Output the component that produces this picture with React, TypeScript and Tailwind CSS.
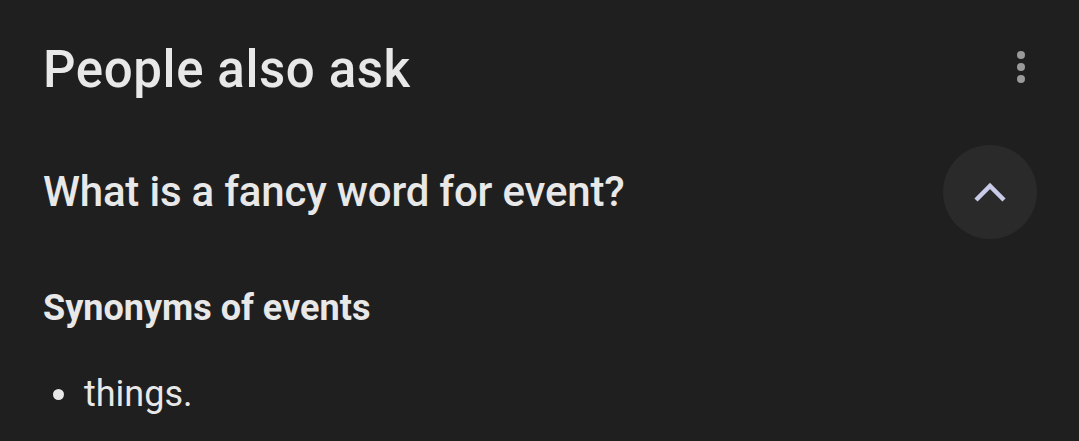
export default function App() {
  return (
    <div
      className="w-[1079px] h-[441px] bg-[#1f1f1f] text-[#e8e8e8] overflow-hidden pl-[43px] pr-[42px]"
      style={{ fontFamily: 'Roboto, "Noto Sans", sans-serif' }}
    >
      <div className="flex items-center justify-between h-[140px] pb-[2px]">
        <h2 className="text-[51px] leading-none font-medium tracking-[0.6px]">People also ask</h2>
        <div className="flex flex-col items-center gap-[4px] w-[8px] mr-[12px] -mt-[4px]">
          <span className="w-[8px] h-[8px] rounded-full bg-[#9a9a9a]" />
          <span className="w-[8px] h-[8px] rounded-full bg-[#9a9a9a]" />
          <span className="w-[8px] h-[8px] rounded-full bg-[#9a9a9a]" />
        </div>
      </div>

      <div className="flex items-center justify-between h-[104px]">
        <div className="text-[42px] leading-none font-medium tracking-[-0.2px]">What is a fancy word for event?</div>
        <button className="w-[94px] h-[94px] rounded-full bg-[#2a2a2a] flex items-center justify-center">
          <svg width="34" height="22" viewBox="0 0 34 22" fill="none">
            <path d="M3 19 L17 5 L31 19" stroke="#c9cbe8" strokeWidth="4.5" />
          </svg>
        </button>
      </div>

      <div className="pt-[46px]">
        <div className="text-[36px] leading-none font-bold">Synonyms of events</div>
        <ul className="mt-[50px]">
          <li className="flex items-center text-[36px] leading-none">
            <span className="w-[11px] h-[11px] rounded-full bg-[#e8e8e8] ml-[10px] mr-[20px]" />
            things.
          </li>
        </ul>
      </div>
    </div>
  )
}
